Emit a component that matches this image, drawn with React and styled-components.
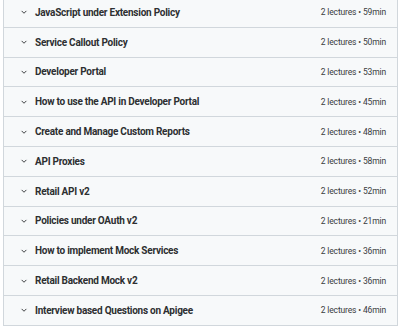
import React from "react";
import styled, { createGlobalStyle } from "styled-components";

const Global = createGlobalStyle`
  html, body { margin: 0; padding: 0; background: #ffffff; }
  body { font-family: Roboto, Inter, "Noto Sans", sans-serif; color: #2d2f31; }
`;

const Wrap = styled.div`
  margin: -2px 2px 0 3px;
  border: 1px solid #d1d7dc;
  border-top: none;
`;

const Row = styled.div`
  display: flex;
  align-items: center;
  height: 28.8px;
  padding: 0 11px 0 15px;
  background: #f7f9fa;
  border-bottom: 1px solid #d1d7dc;
  &:last-child { border-bottom: none; }
`;

const Chevron = styled.svg`
  width: 10px;
  height: 10px;
  flex: none;
  margin-right: 6px;
  color: #2d2f31;
`;

const Title = styled.div`
  flex: 1;
  font-size: 10px;
  font-weight: 700;
  letter-spacing: -0.25px;
  white-space: nowrap;
`;

const Meta = styled.div`
  font-size: 8.5px;
  letter-spacing: -0.15px;
  color: #3a3c3e;
  white-space: nowrap;
`;

const sections = [
  ["JavaScript under Extension Policy", "59min"],
  ["Service Callout Policy", "50min"],
  ["Developer Portal", "53min"],
  ["How to use the API in Developer Portal", "45min"],
  ["Create and Manage Custom Reports", "48min"],
  ["API Proxies", "58min"],
  ["Retail API v2", "52min"],
  ["Policies under OAuth v2", "21min"],
  ["How to implement Mock Services", "36min"],
  ["Retail Backend Mock v2", "36min"],
  ["Interview based Questions on Apigee", "46min"],
];

export default function App() {
  return (
    <>
      <Global />
      <Wrap>
        {sections.map(([t, m]) => (
          <Row key={t}>
            <Chevron viewBox="0 0 24 24" fill="none" stroke="currentColor" strokeWidth="2.2" strokeLinecap="round" strokeLinejoin="round">
              <path d="M7 10l5 5 5-5" />
            </Chevron>
            <Title>{t}</Title>
            <Meta>2 lectures • {m}</Meta>
          </Row>
        ))}
      </Wrap>
    </>
  );
}
